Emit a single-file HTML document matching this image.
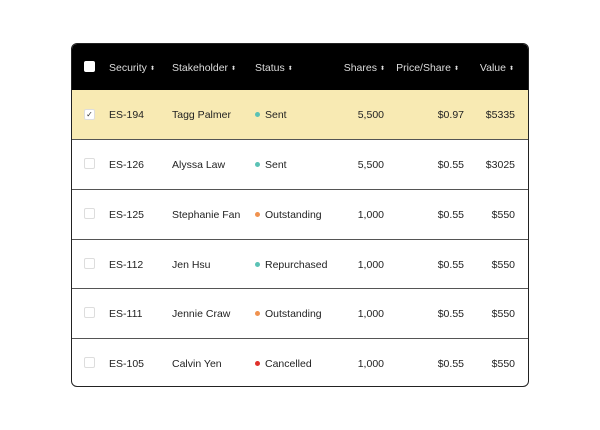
<!DOCTYPE html>
<html><head><style>
*{margin:0;padding:0;box-sizing:border-box}
body{width:600px;height:430px;background:#fff;font-family:"Liberation Sans",sans-serif;font-size:10.5px;color:#222;position:relative}
.t{position:absolute;left:71px;top:43px;width:458px;height:344px;border:1px solid #222;border-radius:6px;overflow:hidden;background:#fff}
.h{position:absolute;left:0;top:0;width:100%;height:47px;background:#000;color:#ddd}
.r{position:absolute;left:0;width:100%;border-top:1px solid #555}
.c{position:absolute;white-space:nowrap}
.cb{position:absolute;left:12px;width:11px;height:11px;border:1px solid #ddd;border-radius:2px;background:#fff}
.ar{font-size:6px;vertical-align:1px;margin-left:3px}
.dot{display:inline-block;width:5px;height:5px;border-radius:50%;margin-right:5px;vertical-align:1px}
.R{text-align:right}
</style></head><body>
<div class="t">
<div class="h">
<div class="cb" style="top:17px;border-color:#fff"></div>
<div class="c" style="left:37px;top:18px">Security<span class="ar">⬍</span></div>
<div class="c" style="left:100px;top:18px">Stakeholder<span class="ar">⬍</span></div>
<div class="c" style="left:183px;top:18px">Status<span class="ar">⬍</span></div>
<div class="c R" style="right:143px;top:18px">Shares<span class="ar">⬍</span></div>
<div class="c R" style="right:69px;top:18px">Price/Share<span class="ar">⬍</span></div>
<div class="c R" style="right:14px;top:18px">Value<span class="ar">⬍</span></div>
</div>
<div class="r" style="top:46px;height:50px;background:#f8eab3;border-top:none"></div>
<div class="r" style="top:95px;height:50px"></div>
<div class="r" style="top:145px;height:50px"></div>
<div class="r" style="top:195px;height:50px"></div>
<div class="r" style="top:244px;height:50px"></div>
<div class="r" style="top:294px;height:50px"></div>
<div style="position:absolute;left:0;top:0;width:100%">
<div class="cb" style="top:65px;font-size:8px;line-height:9px;text-align:center;color:#333">✓</div>
<div class="c" style="left:37px;top:65px">ES-194</div><div class="c" style="left:100px;top:65px">Tagg Palmer</div><div class="c" style="left:183px;top:65px"><span class="dot" style="background:#5bc2b5"></span>Sent</div><div class="c" style="right:144px;top:65px">5,500</div><div class="c" style="right:64px;top:65px">$0.97</div><div class="c" style="right:13px;top:65px">$5335</div>

<div class="cb" style="top:114px"></div>
<div class="c" style="left:37px;top:115px">ES-126</div><div class="c" style="left:100px;top:115px">Alyssa Law</div><div class="c" style="left:183px;top:115px"><span class="dot" style="background:#5bc2b5"></span>Sent</div><div class="c" style="right:144px;top:115px">5,500</div><div class="c" style="right:64px;top:115px">$0.55</div><div class="c" style="right:13px;top:115px">$3025</div>

<div class="cb" style="top:164px"></div>
<div class="c" style="left:37px;top:165px">ES-125</div><div class="c" style="left:100px;top:165px">Stephanie Fan</div><div class="c" style="left:183px;top:165px"><span class="dot" style="background:#f0924f"></span>Outstanding</div><div class="c" style="right:144px;top:165px">1,000</div><div class="c" style="right:64px;top:165px">$0.55</div><div class="c" style="right:13px;top:165px">$550</div>

<div class="cb" style="top:214px"></div>
<div class="c" style="left:37px;top:215px">ES-112</div><div class="c" style="left:100px;top:215px">Jen Hsu</div><div class="c" style="left:183px;top:215px"><span class="dot" style="background:#5bc2b5"></span>Repurchased</div><div class="c" style="right:144px;top:215px">1,000</div><div class="c" style="right:64px;top:215px">$0.55</div><div class="c" style="right:13px;top:215px">$550</div>

<div class="cb" style="top:263px"></div>
<div class="c" style="left:37px;top:264px">ES-111</div><div class="c" style="left:100px;top:264px">Jennie Craw</div><div class="c" style="left:183px;top:264px"><span class="dot" style="background:#f0924f"></span>Outstanding</div><div class="c" style="right:144px;top:264px">1,000</div><div class="c" style="right:64px;top:264px">$0.55</div><div class="c" style="right:13px;top:264px">$550</div>

<div class="cb" style="top:313px"></div>
<div class="c" style="left:37px;top:314px">ES-105</div><div class="c" style="left:100px;top:314px">Calvin Yen</div><div class="c" style="left:183px;top:314px"><span class="dot" style="background:#e0312b"></span>Cancelled</div><div class="c" style="right:144px;top:314px">1,000</div><div class="c" style="right:64px;top:314px">$0.55</div><div class="c" style="right:13px;top:314px">$550</div>
</div>
</div>
</body></html>
